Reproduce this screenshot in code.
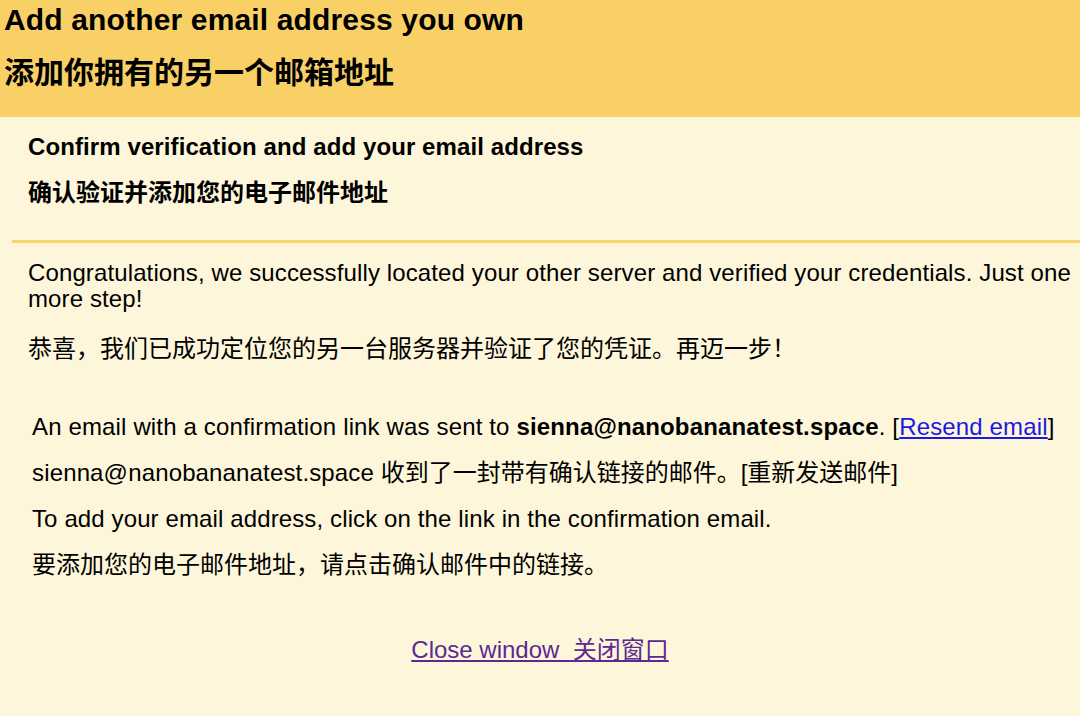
export default function App() {
  const font = "font-['Liberation_Sans','Noto_Sans_CJK_SC',sans-serif]";

  return (
    <div className={`${font} min-h-[716px] w-[1080px] bg-[#fef6da] text-black`}>
      {/* header band */}
      <div className="bg-[#f9d066] pl-[4px] pt-[1px] h-[117px]">
        <h1 className="text-[30px] font-bold leading-[38px] tracking-[0.15px]">Add another email address you own</h1>
        <h1 className="mt-[15px] text-[30px] font-bold leading-[38px]">添加你拥有的另一个邮箱地址</h1>
      </div>

      {/* sub heading */}
      <div className="pl-[28px] pt-[15px]">
        <h2 className="text-[24px] font-bold leading-[30px] tracking-[0.1px]">Confirm verification and add your email address</h2>
        <h2 className="mt-[16px] text-[24px] font-bold leading-[30px]">确认验证并添加您的电子邮件地址</h2>
      </div>

      <div className="ml-[12px] mt-[32px] h-[3px] bg-[#fad46f]" />

      {/* body */}
      <div className="pl-[28px] pt-[17px] text-[24px] leading-[26px]">
        <p className="tracking-[0.12px]">
          Congratulations, we successfully located your other server and verified your credentials. Just one more
          step!
        </p>
        <p className="mt-[24px]">恭喜，我们已成功定位您的另一台服务器并验证了您的凭证。再迈一步！</p>

        <div className="pl-[4px] pt-[50px]">
          <p className="leading-[30px] tracking-[0.15px]">
            An email with a confirmation link was sent to <b>sienna@nanobananatest.space</b>. [
            <a href="#" className="text-[#1a1ae6] underline">Resend email</a>]
          </p>
          <p className="mt-[16px] leading-[30px]">
            <span className="tracking-[0.15px]">sienna@nanobananatest.space</span> 收到了一封带有确认链接的邮件。[重新发送邮件]
          </p>
          <p className="mt-[16px] leading-[30px] tracking-[0.12px]">
            To add your email address, click on the link in the confirmation email.
          </p>
          <p className="mt-[16px] leading-[30px]">要添加您的电子邮件地址，请点击确认邮件中的链接。</p>
        </div>

        <div className="pt-[57px] pr-[28px] text-center">
          <a href="#" className="text-[#5b2a91] underline">
            Close window&nbsp; 关闭窗口
          </a>
        </div>
      </div>
    </div>
  );
}
